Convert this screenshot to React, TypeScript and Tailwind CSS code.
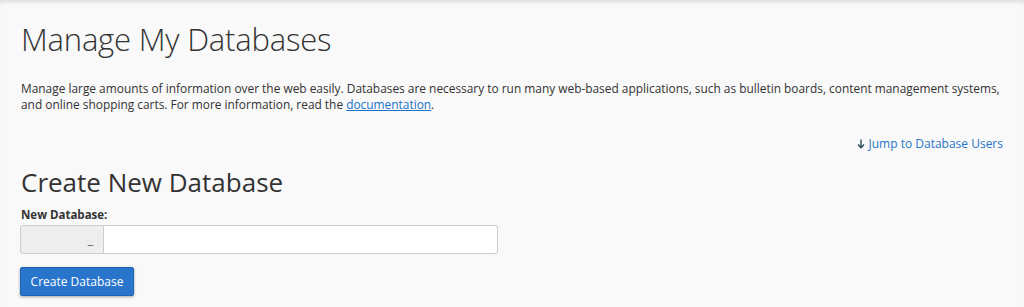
import React from "react";

export default function App() {
  return (
    <div
      className="w-[1024px] h-[307px] overflow-hidden bg-[#f9f9f9] shadow-[inset_0_4px_4px_-2px_rgba(0,0,0,0.12)] text-[#333]"
      style={{ fontFamily: '"Open Sans", sans-serif' }}
    >
      <div className="px-[21px] pt-[19px]">
        <h1 className="text-[31px] leading-[40px] font-light text-[#333] tracking-[-0.2px]">
          Manage My Databases
        </h1>
        <p className="mt-[21px] mr-[-2px] text-[11.9px] leading-[16px] text-[#333]">
          Manage large amounts of information over the web easily. Databases are necessary to run many web-based applications, such as bulletin boards, content management systems, and online shopping carts. For more information, read the{" "}
          <a className="text-[#1a73c9] underline" href="#">documentation</a>.
        </p>
        <div className="mt-[24px] flex justify-end text-[12px] leading-[16px]">
          <a href="#" className="text-[#2a76c6] flex items-center gap-[4px]">
            <svg width="8" height="10" viewBox="0 0 8 10" className="text-[#2c4a5a]">
              <path d="M4 0.5V8.5M1 5.5L4 8.8L7 5.5" stroke="currentColor" strokeWidth="1.4" fill="none" />
            </svg>
            Jump to Database Users
          </a>
        </div>
        <h2 className="mt-[14px] text-[26px] leading-[32px] font-normal text-[#333]">
          Create New Database
        </h2>
        <label className="block mt-[9px] text-[11.5px] leading-[16px] font-bold text-[#333]">
          New Database:
        </label>
        <div className="mt-[2px] ml-[-1px] flex w-[478px] h-[29px]">
          <div className="w-[84px] h-full bg-[#eeeeee] border border-[#cccccc] rounded-l-[3px] flex items-center justify-end pr-[10px] text-[12px] text-[#555]">
            _
          </div>
          <input
            className="flex-1 h-full border border-l-0 border-[#cccccc] rounded-r-[3px] bg-white outline-none px-2 text-[12px]"
            type="text"
          />
        </div>
        <button className="mt-[13px] ml-[-1px] w-[114px] h-[29px] bg-[#2a75cc] border border-[#1f63b3] rounded-[2px] text-white text-[12px] shadow-[0_1px_3px_rgba(0,0,0,0.35)]">
          Create Database
        </button>
      </div>
    </div>
  );
}
